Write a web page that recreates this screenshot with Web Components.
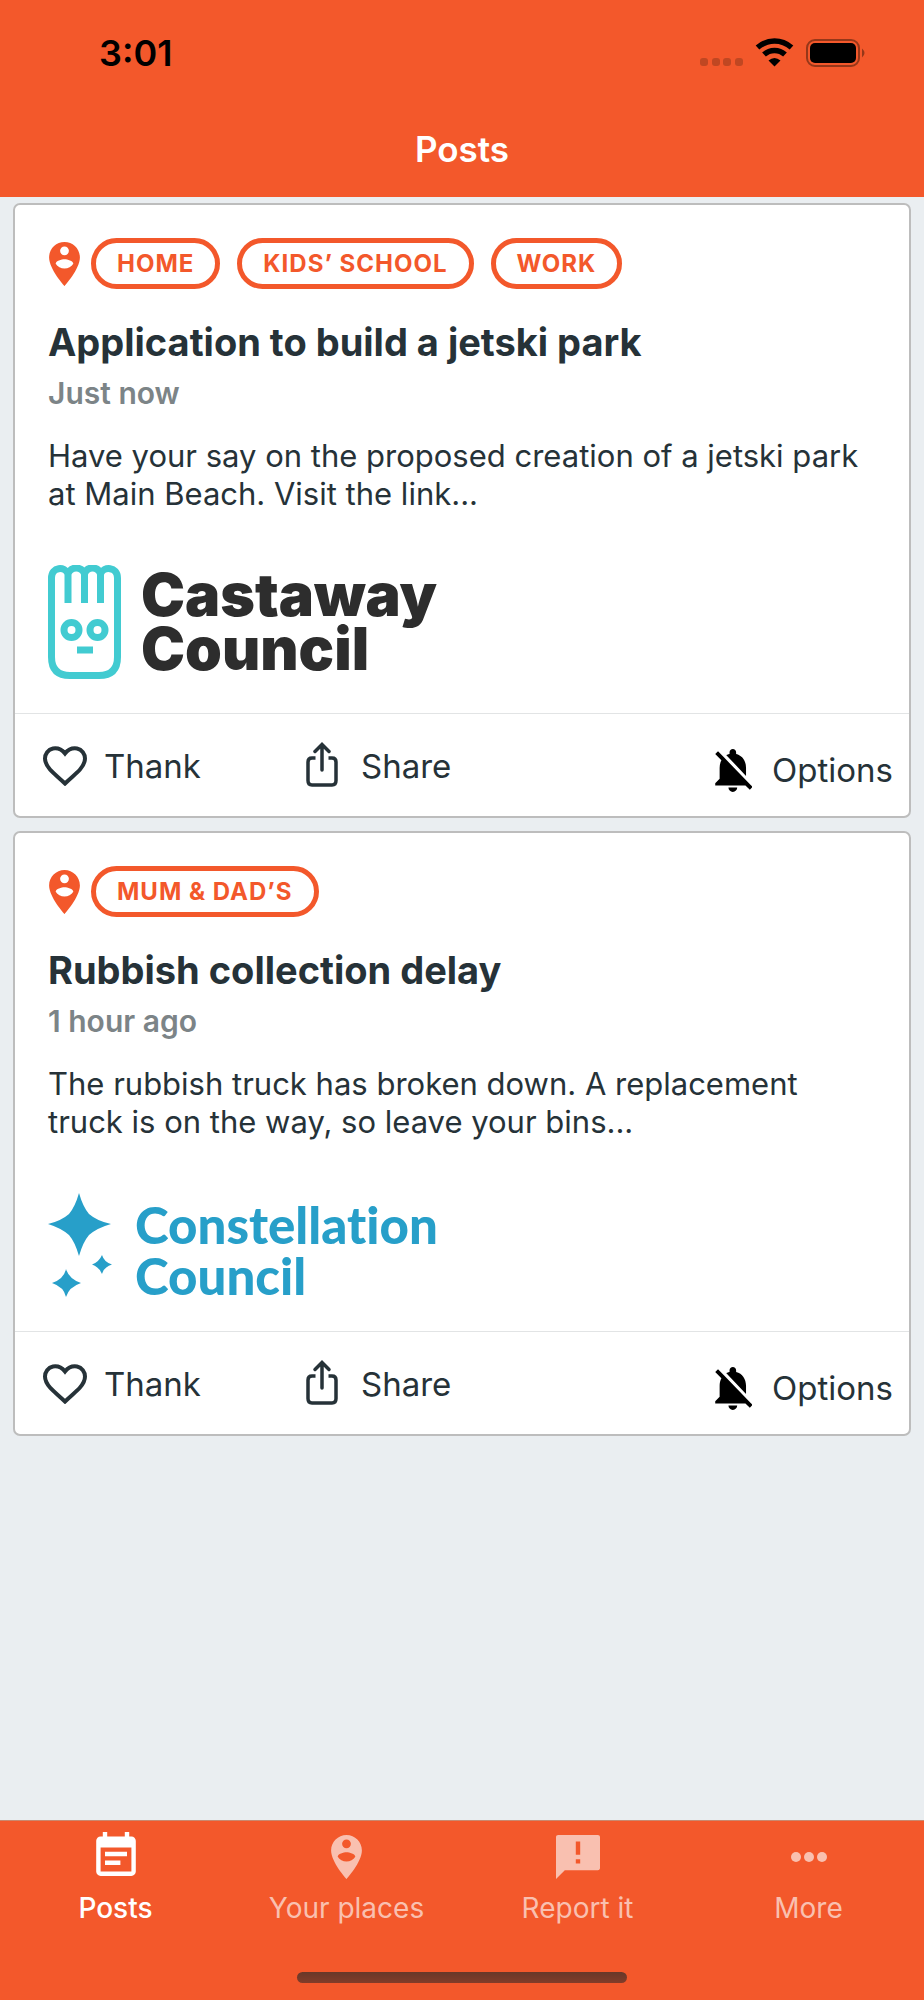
<!DOCTYPE html>
<html lang="en">
<head>
<meta charset="utf-8">
<meta name="viewport" content="width=device-width, initial-scale=1">
<title>Posts</title>
<style>
  body { margin: 0; background: #eaeef1; color: #263238; font-family: Inter, "Liberation Sans", sans-serif; }
</style>
</head>
<body>
<posts-app></posts-app>

<script>
const define = (name, html) => {
  const template = document.createElement('template');
  template.innerHTML = html;
  customElements.define(name, class extends HTMLElement {
    constructor() {
      super();
      this.attachShadow({ mode: 'open' }).append(template.content.cloneNode(true));
    }
  });
};

const ICONS = {
  place: ['5 2 14 20', '<path fill-rule="evenodd" d="M12 2C8.13 2 5 5.13 5 9c0 5.25 7 13 7 13s7-7.75 7-13c0-3.87-3.13-7-7-7zm0 2a2 2 0 1 1 0 4 2 2 0 0 1 0-4zm0 10c-1.67 0-3.14-.85-4-2.150C8.020 10.500 10.670 9.800 12 9.800s3.980.7 4 2.050C15.140 13.150 13.670 14 12 14z"/>'],
  heart: ['1 1 44 40', '<path fill="none" stroke="currentColor" stroke-width="4" d="M23 8.500C19 3.500 14 3 11 3.500C6 4.500 3 9 3 13.500C3 18 5 21 8 24.500C12 29 18 33.500 23 38.500C28 33.500 34 29 38 24.500C41 21 43 18 43 13.500C43 9 40 4.500 35 3.500C32 3 27 3.500 23 8.500Z"/>'],
  share: ['0 0 32 48', '<path fill="none" stroke="currentColor" stroke-width="3.500" stroke-linecap="round" d="M16 28V3M9 9.500L16 2.500L23 9.500"/><path fill="none" stroke="currentColor" stroke-width="3.500" d="M9.500 16H6Q2 16 2 20V38.500Q2 43 6 43H26Q30 43 30 38.500V20Q30 16 26 16H22.500"/>'],
  bell: ['3 2 17.700 20', '<path fill="#000" d="M20 18.690L7.840 6.140 5.270 3.490 4 4.760l2.800 2.800v.01c-.52.99-.8 2.160-.8 3.420v5l-2 2v1h13.730l2 2L21 19.720l-1-1.030zM12 22c1.110 0 2-.89 2-2h-4c0 1.110.89 2 2 2zm6-7.320V11c0-3.080-1.640-5.640-4.500-6.320V4c0-.83-.67-1.500-1.500-1.500s-1.500.67-1.500 1.500v.68c-.15.03-.29.08-.42.12-.1.03-.2.07-.3.110h-.01c-.01 0-.01 0-.02.01-.23.09-.46.2-.68.310 0 0-.01 0-.01.01L18 14.680z"/>'],
  posts: ['3 1 18 20', '<path d="M17 10H7v2h10v-2zm2-7h-1V1h-2v2H8V1H6v2H5c-1.110 0-1.990.9-1.990 2L3 19c0 1.100.89 2 2 2h14c1.100 0 2-.9 2-2V5c0-1.100-.9-2-2-2zm0 16H5V8h14v11zm-5-5H7v2h7v-2z"/>'],
  report: ['2 2 20 20', '<path d="M21 2H3C2.400 2 2 2.400 2 3v19l4-4h15c.6 0 1-.4 1-1V3c0-.6-.4-1-1-1zm-8 11h-2v2h2zM13 5h-2v6h2z" fill-rule="evenodd"/>'],
  more: ['0 0 36 10', '<circle cx="5" cy="5" r="5"/><circle cx="18" cy="5" r="5"/><circle cx="31" cy="5" r="5"/>']
};

customElements.define('app-icon', class extends HTMLElement {
  constructor() { super(); this.attachShadow({ mode: 'open' }); }
  connectedCallback() {
    const [box, shape] = ICONS[this.getAttribute('name')];
    this.shadowRoot.innerHTML = `<style>
      :host { display: block; flex: none; }
      svg { display: block; width: 100%; height: 100%; fill: currentColor; }
    </style><svg viewBox="${box}" aria-hidden="true">${shape}</svg>`;
  }
});

define('status-bar', `
  <style>
    :host { display: flex; align-items: center; justify-content: space-between; height: 105px; padding: 0 58px 0 99px; color: #000; }
    time { font-size: 36px; line-height: 44px; font-weight: 600; }
    svg { display: block; width: 166px; height: 30px; }
  </style>
  <time>3:01</time>
  <svg viewBox="0 0 166 30" role="img" aria-label="No signal, Wi-Fi on, battery full">
    <g fill="#c04722"><rect y="20" width="8" height="8" rx="3"/><rect x="12" y="20" width="8" height="8" rx="3"/><rect x="23" y="20" width="8" height="8" rx="3"/><rect x="35" y="20" width="8" height="8" rx="3"/></g>
    <g fill="none" stroke="#000" stroke-width="5.500"><path d="M57.500 9.500C67.500 .8 81.500 .8 91.500 9.500"/><path d="M64 16.500C70 11 79 11 85 16.500"/></g>
    <path d="M68.500 22.500Q74.500 17.500 80.500 22.500L74.500 28.500Z"/>
    <rect x="107" y="2" width="52" height="26" rx="8" fill="none" stroke="#953719" stroke-width="2"/>
    <rect x="110" y="5" width="46" height="20" rx="5"/>
    <path d="M162 10.500Q167 15 162 19.500Z" fill="#953719"/>
  </svg>`);

define('app-header', `
  <style>
    :host { display: block; background: #f3582b; color: #fff; }
    h1 { margin: 0; padding: 22px 0 26px; text-align: center; font-size: 35px; line-height: 44px; font-weight: 600; }
  </style>
  <status-bar></status-bar>
  <h1><slot></slot></h1>`);

define('place-chip', `
  <style>
    :host { display: block; box-sizing: border-box; padding: 0 21px; border: 5px solid #f3582b; border-radius: 26px; font-size: 24px; line-height: 41px; font-weight: 700; letter-spacing: 1px; text-transform: uppercase; color: #f3582b; white-space: nowrap; }
  </style>
  <slot></slot>`);

define('action-button', `
  <style>
    :host { display: block; }
    button { display: flex; align-items: center; gap: 17px; height: 44px; margin: 0; padding: 0; border: 0; background: none; color: inherit; font: inherit; font-size: 33px; line-height: 44px; white-space: nowrap; cursor: pointer; }
  </style>
  <button type="button"><slot name="icon"></slot><span><slot></slot></span></button>`);

define('castaway-logo', `
  <style>
    :host { display: flex; gap: 19px; height: 114px; color: #2d2d2d; }
    svg { width: 74px; height: 114px; }
    div { font-size: 59px; line-height: 54px; font-weight: 900; padding-top: 3px; }
  </style>
  <svg viewBox="0 0 74 114" aria-hidden="true" fill="none" stroke="#42cbd1" stroke-width="7">
    <path d="M3.500 38V13C3.500 1.500 17 1 20 9V38M20 9C22.500 1 34 1 36.500 9V38M36.500 9C39 1 50 1 52.500 9V38M52.500 9C55.500 1 69.500 1.500 69.500 13V92Q69.500 110.500 51 110.500H22Q3.500 110.500 3.500 92V36"/>
    <circle cx="23.500" cy="65" r="7.500"/><circle cx="49.500" cy="65" r="7.500"/><path d="M29 85H45"/>
  </svg>
  <div>Castaway<br>Council</div>`);

define('constellation-logo', `
  <style>
    :host { display: flex; gap: 23px; height: 104px; color: #279fc9; font-family: Lato, sans-serif; }
    svg { width: 64px; height: 104px; }
    div { font-size: 51px; line-height: 51px; font-weight: 900; font-variant-ligatures: none; padding-top: 6px; }
  </style>
  <svg viewBox="0 0 64 104" aria-hidden="true" fill="#279fc9">
    <path d="M31 0Q35 14 41 21Q49 28 63 31Q49 35 41 42Q35 49 31 63Q27 49 21 42Q13 35 0 31Q13 28 21 21Q27 14 31 0Z"/>
    <path d="M54 62Q56 69 64 71.500Q56 74 54 81Q51 74 44 71.500Q51 69 54 62Z"/>
    <path d="M18 76Q21 86 33 90Q21 94 18 104Q16 94 4 90Q16 86 18 76Z"/>
  </svg>
  <div>Constellation<br>Council</div>`);

define('post-card', `
  <style>
    :host { display: block; background: #fff; border: 2px solid #bdbdbd; border-radius: 7px; }
    .content { padding: 33px 33px 34px; }
    .places { display: flex; align-items: center; }
    .places app-icon { width: 31px; height: 44px; margin: 0 11px 0 1px; color: #f3582b; }
    .chips { display: flex; flex-wrap: wrap; gap: 17px; }
    h2, p { margin: 0; }
    h2 { margin-top: 30px; font-size: 38px; line-height: 46px; font-weight: 700; }
    .time { margin-top: 10px; font-size: 30px; line-height: 36px; font-weight: 600; color: #7c8487; }
    .body { margin: 26px 0 52px; font-size: 31px; line-height: 38px; }
    footer { display: grid; grid-template-columns: 263px 1fr auto; align-items: start; padding: 0 16px 0 28px; border-top: 1px solid #e2e4e5; }
    action-button { padding: 30px 0 28px; }
    .options { padding: 34px 0 24px; }
    .heart { width: 44px; height: 40px; }
    .share { width: 32px; height: 48px; margin-right: 6px; }
    .bell { width: 39px; height: 44px; margin-right: 3px; }
  </style>
  <article>
    <div class="content">
      <div class="places"><app-icon name="place"></app-icon><div class="chips"><slot name="places"></slot></div></div>
      <h2><slot name="title"></slot></h2>
      <p class="time"><slot name="time"></slot></p>
      <p class="body"><slot></slot></p>
      <slot name="logo"></slot>
    </div>
    <footer>
      <action-button><app-icon slot="icon" class="heart" name="heart"></app-icon>Thank</action-button>
      <action-button><app-icon slot="icon" class="share" name="share"></app-icon>Share</action-button>
      <action-button class="options"><app-icon slot="icon" class="bell" name="bell"></app-icon>Options</action-button>
    </footer>
  </article>`);

define('tab-bar', `
  <style>
    :host { display: block; background: #f3582b; border-top: 1px solid #c9886f; }
    nav { display: grid; grid-template-columns: repeat(4, 1fr); }
    a { display: flex; flex-direction: column; align-items: center; padding-top: 10px; color: #f9c0b0; font-size: 28px; line-height: 36px; text-decoration: none; }
    a[aria-current] { color: #fff; font-weight: 500; }
    .icon { display: flex; align-items: center; justify-content: center; height: 52px; margin-bottom: 7px; }
    .posts { width: 40px; height: 44px; margin-bottom: 6px; }
    .place { width: 31px; height: 44px; }
    .report { width: 44px; height: 44px; }
    .more { width: 36px; height: 10px; }
    .home { width: 330px; height: 11px; margin: 46px auto 17px; border-radius: 6px; background: linear-gradient(#673829, #823c29); }
  </style>
  <nav aria-label="Main">
    <a href="#posts" aria-current="page"><span class="icon"><app-icon class="posts" name="posts"></app-icon></span>Posts</a>
    <a href="#places"><span class="icon"><app-icon class="place" name="place"></app-icon></span>Your places</a>
    <a href="#report"><span class="icon"><app-icon class="report" name="report"></app-icon></span>Report it</a>
    <a href="#more"><span class="icon"><app-icon class="more" name="more"></app-icon></span>More</a>
  </nav>
  <div class="home"></div>`);

define('posts-app', `
  <style>
    :host { display: flex; flex-direction: column; min-height: 100vh; }
    main { flex: 1; display: flex; flex-direction: column; gap: 13px; padding: 6px 13px; }
  </style>
  <app-header>Posts</app-header>
  <main>
    <post-card>
      <place-chip slot="places">Home</place-chip>
      <place-chip slot="places">Kids’ school</place-chip>
      <place-chip slot="places">Work</place-chip>
      <span slot="title">Application to build a jetski park</span>
      <span slot="time">Just now</span>
      Have your say on the proposed creation of a jetski park at Main Beach. Visit the link...
      <castaway-logo slot="logo"></castaway-logo>
    </post-card>
    <post-card>
      <place-chip slot="places">Mum &amp; Dad’s</place-chip>
      <span slot="title">Rubbish collection delay</span>
      <span slot="time">1 hour ago</span>
      The rubbish truck has broken down. A replacement truck is on the way, so leave your bins...
      <constellation-logo slot="logo"></constellation-logo>
    </post-card>
  </main>
  <tab-bar></tab-bar>`);
</script>
</body>
</html>
